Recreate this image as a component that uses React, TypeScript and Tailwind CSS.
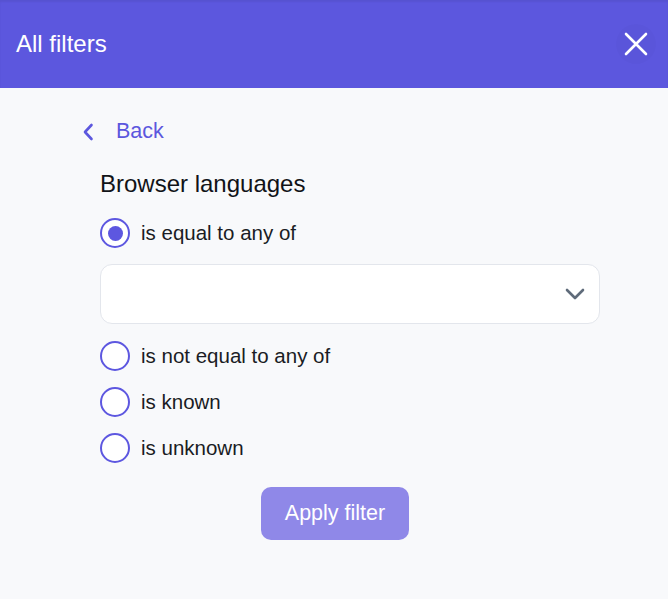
import React from "react";

function Radio({ checked }: { checked?: boolean }) {
  return (
    <span className="flex h-[30px] w-[30px] shrink-0 items-center justify-center rounded-full border-[2.5px] border-[#5d57e0] bg-white">
      {checked && <span className="h-[15px] w-[15px] rounded-full bg-[#5d57e0]" />}
    </span>
  );
}

function Option({ label, checked }: { label: string; checked?: boolean }) {
  return (
    <div className="flex h-[30px] items-center gap-[11px]">
      <Radio checked={checked} />
      <span className="text-[20.5px] leading-none text-[#1a1c24]">{label}</span>
    </div>
  );
}

export default function App() {
  return (
    <div
      className="flex h-[599px] w-[668px] flex-col bg-[#f8f9fb]"
      style={{ fontFamily: '"Liberation Sans", Arial, sans-serif' }}
    >
      <header className="flex h-[88px] shrink-0 items-center justify-between bg-[#5c57de] pl-[16px] pr-[12px] shadow-[inset_0_2px_2px_rgba(0,0,0,0.06)]">
        <h1 className="text-[24px] font-normal leading-none text-white">All filters</h1>
        <button className="flex h-[40px] w-[40px] items-center justify-center rounded-full bg-black/[0.015]">
          <svg width="24" height="24" viewBox="0 0 24 24" fill="none" stroke="white" strokeWidth="2.6" strokeLinecap="round">
            <path d="M2 2L22 22M22 2L2 22" />
          </svg>
        </button>
      </header>

      <div className="flex flex-col pl-[82px] pr-[68px] pt-[33px]">
        <div className="flex h-[22px] items-center gap-[22px] text-[#5c57de]">
          <svg width="12" height="18" viewBox="0 0 12 18" fill="none" stroke="currentColor" strokeWidth="2.6" strokeLinecap="round" strokeLinejoin="round">
            <path d="M9.5 2L3 9L9.5 16" />
          </svg>
          <span className="text-[21.5px] leading-none">Back</span>
        </div>

        <div className="flex flex-col pl-[18px]">
          <h2 className="mt-[29px] text-[24px] font-normal leading-none text-[#111318]">Browser languages</h2>
          <div className="mt-[22px]">
            <Option label="is equal to any of" checked />
          </div>
          <div className="mt-[16px] flex h-[60px] items-center justify-end rounded-[12px] border border-[#e3e6ec] bg-white pr-[14px]">
            <svg width="20" height="12" viewBox="0 0 20 12" fill="none" stroke="#5f6b7a" strokeWidth="2.6" strokeLinecap="round" strokeLinejoin="round">
              <path d="M2 2L10 10L18 2" />
            </svg>
          </div>
          <div className="mt-[17px] flex flex-col gap-[16px]">
            <Option label="is not equal to any of" />
            <Option label="is known" />
            <Option label="is unknown" />
          </div>
        </div>
      </div>

      <div className="mt-[24px] flex justify-center pl-[2px]">
        <button className="flex h-[53px] w-[148px] items-center justify-center rounded-[10px] bg-[#8f88e8] text-[21.5px] leading-none text-white">
          Apply filter
        </button>
      </div>
    </div>
  );
}
